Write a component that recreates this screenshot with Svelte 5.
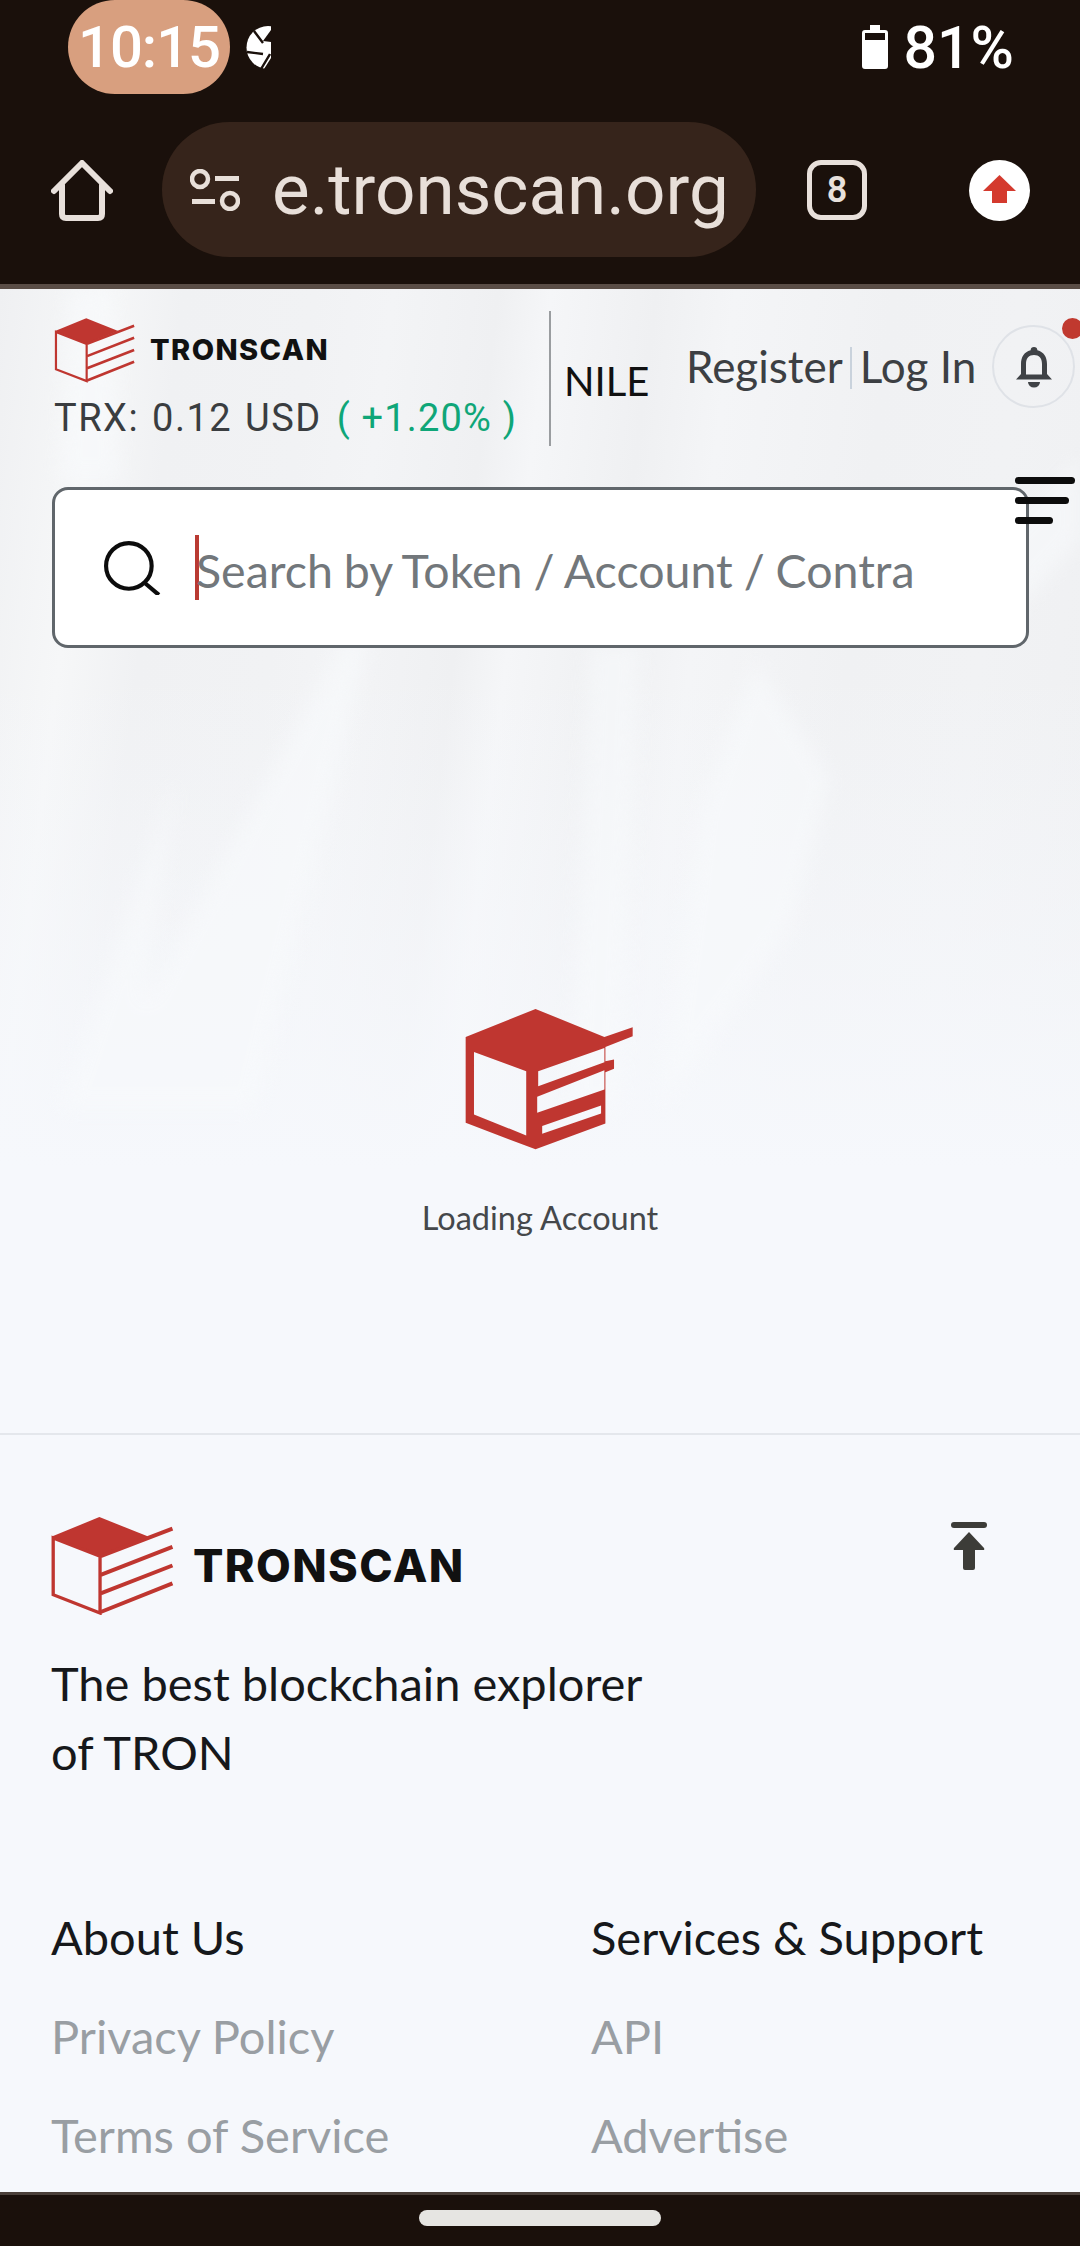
<script>
  const footerCols = [
    { title: 'About Us', links: ['Privacy Policy', 'Terms of Service'] },
    { title: 'Services & Support', links: ['API', 'Advertise'] }
  ];
</script>

{#snippet logo(cls)}
  <svg class={cls} viewBox="60 75 372 298" aria-hidden="true">
    <polygon points="65,137 208,78 355,137 208,195" fill="#bf3630" />
    <path d="M69,141 V312 L210,367 V196 Z" fill="none" stroke="#bf3630" stroke-width="10" />
    <path d="M212,196 L428,113 M212,252 L428,168 M212,308 L428,224 M212,364 L428,278" fill="none" stroke="#bf3630" stroke-width="12" />
  </svg>
{/snippet}

<div class="phone">
  <div class="status">
    <div class="left">
      <span class="time">10:15</span>
      <svg class="shutter" viewBox="0 0 25 43" aria-hidden="true">
        <circle cx="22" cy="21.5" r="21.5" fill="#fff" />
        <path d="M8 5 L17 17 M1 26 L17 28 M15 43 L24 28" stroke="#1a100b" stroke-width="2.4" fill="none" />
        <polygon points="17,15 25,4 25,16" fill="#1a100b" />
        <polygon points="18,43 25,32 25,43" fill="#1a100b" />
      </svg>
    </div>
    <div class="right">
      <svg class="battery" viewBox="0 0 26 44" aria-hidden="true">
        <path d="M8 0 H18 V5 H23 Q26 5 26 8 V41 Q26 44 23 44 H3 Q0 44 0 41 V8 Q0 5 3 5 H8 Z" fill="#fff" />
        <rect x="3" y="8" width="20" height="7" fill="#1a100b" />
      </svg>
      <span class="pct">81%</span>
    </div>
  </div>

  <div class="toolbar">
    <svg class="home" viewBox="0 0 62 62" aria-hidden="true">
      <path d="M3 31 L31 3 L59 31 M11 25 V54 Q11 58 15 58 H47 Q51 58 51 54 V25" fill="none" stroke="#e8e0db" stroke-width="6" stroke-linejoin="round" stroke-linecap="round" />
    </svg>
    <div class="url">
      <svg class="tune" viewBox="0 0 50 42" aria-hidden="true">
        <circle cx="10" cy="10" r="8" fill="none" stroke="#e8dfd9" stroke-width="4.5" />
        <rect x="25" y="7" width="24" height="5" fill="#e8dfd9" />
        <rect x="2" y="30" width="23" height="5" fill="#e8dfd9" />
        <circle cx="40" cy="32" r="8" fill="none" stroke="#e8dfd9" stroke-width="4.5" />
      </svg>
      <span class="host">e.tronscan.org</span>
    </div>
    <div class="tabs"><span>8</span></div>
    <svg class="upload" viewBox="0 0 61 61" aria-hidden="true">
      <circle cx="30.5" cy="30.5" r="30.5" fill="#fff" />
      <path d="M30.5 15 L47 31 H38 V43 H23 V31 H14 Z" fill="#d43a2e" />
    </svg>
  </div>

  <main class="page">
    <svg class="texture" viewBox="0 0 1080 1000" aria-hidden="true">
      <g fill="#f8fafc" class="shards">
        <polygon points="345,350 368,350 255,820 85,820" />
        <polygon points="755,372 830,490 790,640 660,820 700,520" />
        <polygon points="175,490 130,820 60,820" />
        <polygon points="590,355 640,355 620,820 570,820" />
        <polygon points="70,0 112,0 120,190 60,190" />
        <polygon points="1080,170 1080,250 1010,330 1000,250" />
      </g>
    </svg>

    <header class="site-head">
      <div class="brand">
        <div class="brand-row">
          {@render logo('logo-small')}
          <span class="word-small">TRONSCAN</span>
        </div>
        <div class="price">TRX: 0.12 USD <em>( +1.20% )</em></div>
      </div>
      <div class="net">NILE</div>
      <div class="auth">
        <span>Register</span><i></i><span>Log In</span>
      </div>
      <div class="bell">
        <svg viewBox="0 0 40 42" aria-hidden="true">
          <path d="M20 1 a3.5 3.5 0 0 1 3.4 3.2 C30 6 33 11 33 18 V28 L38 33.5 H2 L7 28 V18 C7 11 10 6 16.6 4.2 A3.5 3.5 0 0 1 20 1 Z M12 28.5 H28 V18 C28 12 25 9 20 9 C15 9 12 12 12 18 Z" fill="#3f4246" fill-rule="evenodd" />
          <path d="M14 36 H26 A6 5.5 0 0 1 14 36 Z" fill="#3f4246" />
        </svg>
        <b class="dot"></b>
      </div>
    </header>

    <div class="search-wrap">
      <div class="search">
        <svg class="glass" viewBox="0 0 56 52" aria-hidden="true">
          <circle cx="24" cy="24" r="22" fill="none" stroke="#0c0c0c" stroke-width="4" />
          <path d="M40 41 L53 52" stroke="#0c0c0c" stroke-width="4" />
        </svg>
        <i class="caret"></i>
        <span class="placeholder">Search by Token / Account / Contra</span>
      </div>
      <div class="burger"><i></i><i></i><i></i></div>
    </div>

    <section class="loading">
      <svg class="cube" viewBox="130 80 520 440" aria-hidden="true">
        <path fill="#bf3630" fill-rule="evenodd" d="M138,172 L348,88 L555,172 L640,143 V170 L558,202 V245 L584,240 V268 L558,278 V432 L348,510 L138,430 Z
          M163,217 L320,275 V468 L163,405 Z
          M356,275 L555,205 V248 L356,320 Z
          M353,352 L555,272 V330 L353,400 Z
          M368,440 L545,378 V402 L368,463 Z" />
      </svg>
      <p>Loading Account</p>
    </section>

    <footer class="foot">
      <div class="foot-top">
        <div class="foot-brand">
          {@render logo('logo-big')}
          <span class="word-big">TRONSCAN</span>
        </div>
        <svg class="totop" viewBox="0 0 38 50" aria-hidden="true">
          <rect x="1" y="0" width="36" height="6" rx="3" fill="#3c3c38" />
          <path d="M19 10 L34 26 Q35 28 33 28 H25 V46 Q25 48 23 48 H15 Q13 48 13 46 V28 H5 Q3 28 4 26 Z" fill="#3c3c38" />
        </svg>
      </div>
      <p class="tagline">The best blockchain explorer<br />of TRON</p>
      <div class="cols">
        {#each footerCols as col}
          <div class="col">
            <h4>{col.title}</h4>
            {#each col.links as link}
              <a href="#top">{link}</a>
            {/each}
          </div>
        {/each}
      </div>
    </footer>
  </main>

  <div class="navbar"><i></i></div>
</div>

<style>
  :global(body) { margin: 0; background: #1a100b; }
  .phone {
    width: 1080px; height: 2246px; display: flex; flex-direction: column;
    background: #1a100b; overflow: hidden; font-family: Lato, "Liberation Sans", sans-serif;
  }
  .status {
    height: 122px; flex: none; display: flex; justify-content: space-between; align-items: flex-start;
    box-sizing: border-box; padding: 0 66px 0 68px;
  }
  .left { display: flex; align-items: flex-start; gap: 16px; }
  .time {
    width: 162px; height: 94px; border-radius: 47px; background: #d89f7f; color: #fff;
    font: 500 58px/94px Roboto, sans-serif; letter-spacing: -1px; text-align: center;
  }
  .shutter { width: 25px; height: 43px; margin-top: 26px; }
  .right { display: flex; align-items: center; gap: 15px; height: 94px; }
  .battery { width: 26px; height: 44px; }
  .pct { font: 500 59px/1 Roboto, sans-serif; color: #fff; }

  .toolbar {
    flex: none; display: flex; align-items: flex-start; box-sizing: border-box;
    padding: 0 50px 0 51px; border-bottom: 5px solid #5a4d46; height: 167px;
  }
  .home { width: 62px; height: 62px; margin: 38px 49px 0 0; flex: none; }
  .url {
    width: 594px; height: 135px; border-radius: 68px; background: #36241b; flex: none;
    display: flex; align-items: center; box-sizing: border-box; padding-left: 28px; gap: 32px;
  }
  .tune { width: 50px; height: 42px; flex: none; }
  .host { font: 400 71px/1 Roboto, sans-serif; color: #e8dfd9; white-space: nowrap; }
  .tabs {
    width: 60px; height: 60px; margin: 38px 0 0 51px; box-sizing: border-box; border: 5px solid #e8e0db;
    border-radius: 14px; display: flex; align-items: center; justify-content: center;
    font: 600 36px/1 Roboto, sans-serif; color: #e8e0db; flex: none;
  }
  .upload { width: 61px; height: 61px; margin: 38px 0 0 102px; flex: none; }

  .page {
    flex: 1; min-height: 0; overflow: hidden; position: relative;
    background:
      linear-gradient(to bottom, rgba(246,248,252,0) 0, rgba(246,248,252,0) 380px, #f6f8fc 880px),
      linear-gradient(97deg, #eff0f2 0, #f6f7f8 8%, #f0f1f3 14%, #f1f2f4 24%, #f3f4f6 30%, #eff0f2 38%, #f5f6f8 42%, #eff0f2 50%, #f4f5f7 56%, #f0f1f3 68%, #f1f2f4 78%, #eff0f2 90%, #f3f4f5 100%);
  }
  .texture { position: absolute; left: 0; top: 0; width: 1080px; height: 1000px; }
  .shards { filter: blur(9px); opacity: 0.6; }
  .site-head, .search-wrap, .loading, .foot { position: relative; }
  .site-head { height: 198px; box-sizing: border-box; padding: 22px 0 0 54px; display: flex; align-items: flex-start; }
  .brand { width: 495px; flex: none; border-right: 2px solid #9a9da0; height: 135px; margin-right: 13px; }
  .brand-row { display: flex; align-items: center; gap: 15px; height: 72px; margin-top: 3px; }
  .logo-small { width: 81px; height: 66px; flex: none; }
  .word-small { font: 800 29px/1 Inter, sans-serif; color: #111; letter-spacing: 1.4px; margin-top: -2px; }
  .price { font: 400 38px/1 Roboto, sans-serif; color: #3a3d40; margin-top: 13px; white-space: nowrap; letter-spacing: 1.5px; word-spacing: 2px; }
  .price em { font-style: normal; color: #0fa678; margin-left: 2px; letter-spacing: 1.2px; word-spacing: 0; }
  .net { font-size: 40px; line-height: 1; color: #111; margin-top: 50px; width: 122px; flex: none; }
  .auth { display: flex; align-items: center; margin-top: 29px; font-size: 44px; line-height: 52px; color: #3c3f43; flex: none; }
  .auth i { width: 2px; height: 42px; background: #c9d2dc; margin: 4px 8px 0 7px; }
  .bell {
    position: absolute; left: 992px; top: 36px; width: 83px; height: 83px; box-sizing: border-box;
    border: 2.5px solid #dfe2e7; border-radius: 50%; display: flex; align-items: center; justify-content: center;
  }
  .bell svg { width: 40px; height: 42px; }
  .dot { position: absolute; left: 68px; top: -9px; width: 21px; height: 21px; border-radius: 50%; background: #c0392f; }

  .search-wrap { padding-left: 52px; }
  .search {
    width: 977px; height: 161px; box-sizing: border-box; background: #fff; border: 3px solid #60666b; border-radius: 16px;
    display: flex; align-items: center; padding-left: 49px;
  }
  .glass { width: 58px; height: 54px; flex: none; margin-right: 33px; }
  .caret { width: 4px; height: 65px; background: #b93a32; flex: none; }
  .placeholder { font-size: 46.5px; line-height: 1; color: #72777b; white-space: nowrap; margin: 5px 0 0 -3px; word-spacing: -1px; }
  .burger { position: absolute; left: 1015px; top: -10px; display: flex; flex-direction: column; gap: 13px; align-items: flex-start; }
  .burger i { display: block; height: 7px; border-radius: 4px; background: #0c0c0c; }
  .burger i:nth-child(1) { width: 60px; }
  .burger i:nth-child(2) { width: 54px; }
  .burger i:nth-child(3) { width: 38px; }

  .loading { height: 787px; box-sizing: border-box; padding-top: 358px; display: flex; flex-direction: column; align-items: center; border-bottom: 2px solid #e4e7ec; }
  .cube { width: 173px; height: 147px; flex: none; margin-left: 18px; }
  .loading p { margin: 45px 0 0; font-size: 32.5px; line-height: 40px; color: #45484b; }

  .foot { padding: 81px 52px 0 50px; }
  .foot-top { display: flex; justify-content: space-between; align-items: flex-start; }
  .foot-brand { display: flex; align-items: center; gap: 19px; }
  .logo-big { width: 124px; height: 99px; flex: none; }
  .word-big { font: 800 45px/1 Inter, sans-serif; color: #111; letter-spacing: 1.4px; }
  .totop { width: 38px; height: 50px; margin: 6px 40px 0 0; }
  .tagline { margin: 34px 0 0 1px; font-size: 47px; line-height: 69px; color: #16181b; }
  .cols { display: flex; margin-top: 120px; margin-left: 1px; }
  .col { width: 540px; flex: none; display: flex; flex-direction: column; }
  .col h4 { margin: 0; font-weight: 400; font-size: 47px; line-height: 60px; color: #16181b; }
  .col a { margin-top: 39px; font-size: 47px; line-height: 60px; color: #999ea3; text-decoration: none; }

  .navbar { height: 54px; flex: none; box-sizing: border-box; border-top: 3px solid #4a3f39; display: flex; justify-content: center; padding-top: 15px; }
  .navbar i { width: 242px; height: 16px; border-radius: 8px; background: #e6e5e2; }
</style>
